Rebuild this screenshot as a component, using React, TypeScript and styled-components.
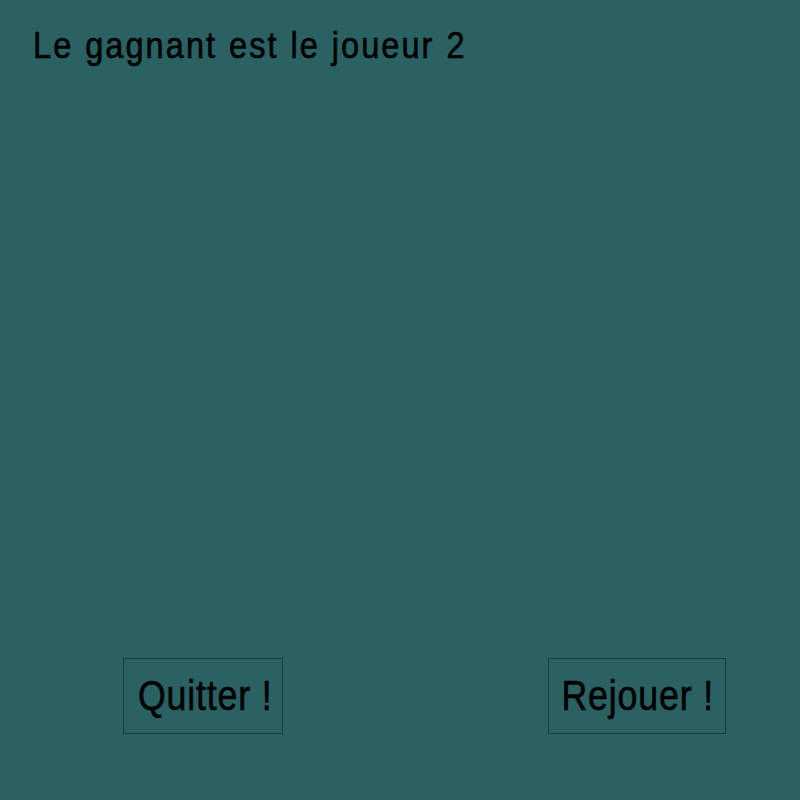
import React from "react";
import styled, { createGlobalStyle } from "styled-components";

const Global = createGlobalStyle`
  html, body { margin: 0; padding: 0; background: #2a6163; }
  #root { width: 800px; height: 800px; }
`;

const Screen = styled.div`
  width: 800px;
  height: 800px;
  background: #2a6163;
  display: flex;
  flex-direction: column;
  font-family: "Liberation Sans", Arial, sans-serif;
  color: #000;
`;

const Label = styled.span<{
  $size: number;
  $spacing: number;
  $words: number;
  $scale: number;
  $origin: string;
}>`
  display: inline-block;
  font-size: ${(p) => p.$size}px;
  line-height: ${(p) => p.$size}px;
  letter-spacing: ${(p) => p.$spacing}px;
  word-spacing: ${(p) => p.$words}px;
  white-space: nowrap;
  transform: scaleX(${(p) => p.$scale});
  transform-origin: ${(p) => p.$origin};
  -webkit-text-stroke: 0.6px #000;
`;

const Title = styled.h1`
  margin: 0;
  padding: 27px 0 0 33px;
  font-weight: normal;
  font-size: 37px;
  line-height: 37px;
`;

const Spacer = styled.div`
  flex: 1;
`;

const ButtonRow = styled.div`
  display: flex;
  justify-content: space-between;
  padding: 0 74px 66px 123px;
`;

const Button = styled.button<{ $w: number; $shift: number }>`
  box-sizing: border-box;
  width: ${(p) => p.$w}px;
  height: 76px;
  background: transparent;
  border: 1px solid #163b3c;
  font-family: inherit;
  color: #000;
  padding: 0 0 0 ${(p) => p.$shift}px;
  display: flex;
  align-items: center;
  justify-content: center;
  overflow: visible;
`;

export default function App() {
  return (
    <>
      <Global />
      <Screen>
        <Title>
          <Label $size={37} $spacing={2.3} $words={1} $scale={0.88} $origin="left center">
            Le gagnant est le joueur 2
          </Label>
        </Title>
        <Spacer />
        <ButtonRow>
          <Button $w={160} $shift={5}>
            <Label $size={42} $spacing={1} $words={0} $scale={0.85} $origin="center">
              Quitter !
            </Label>
          </Button>
          <Button $w={178} $shift={1}>
            <Label $size={42} $spacing={1} $words={0} $scale={0.85} $origin="center">
              Rejouer !
            </Label>
          </Button>
        </ButtonRow>
      </Screen>
    </>
  );
}
